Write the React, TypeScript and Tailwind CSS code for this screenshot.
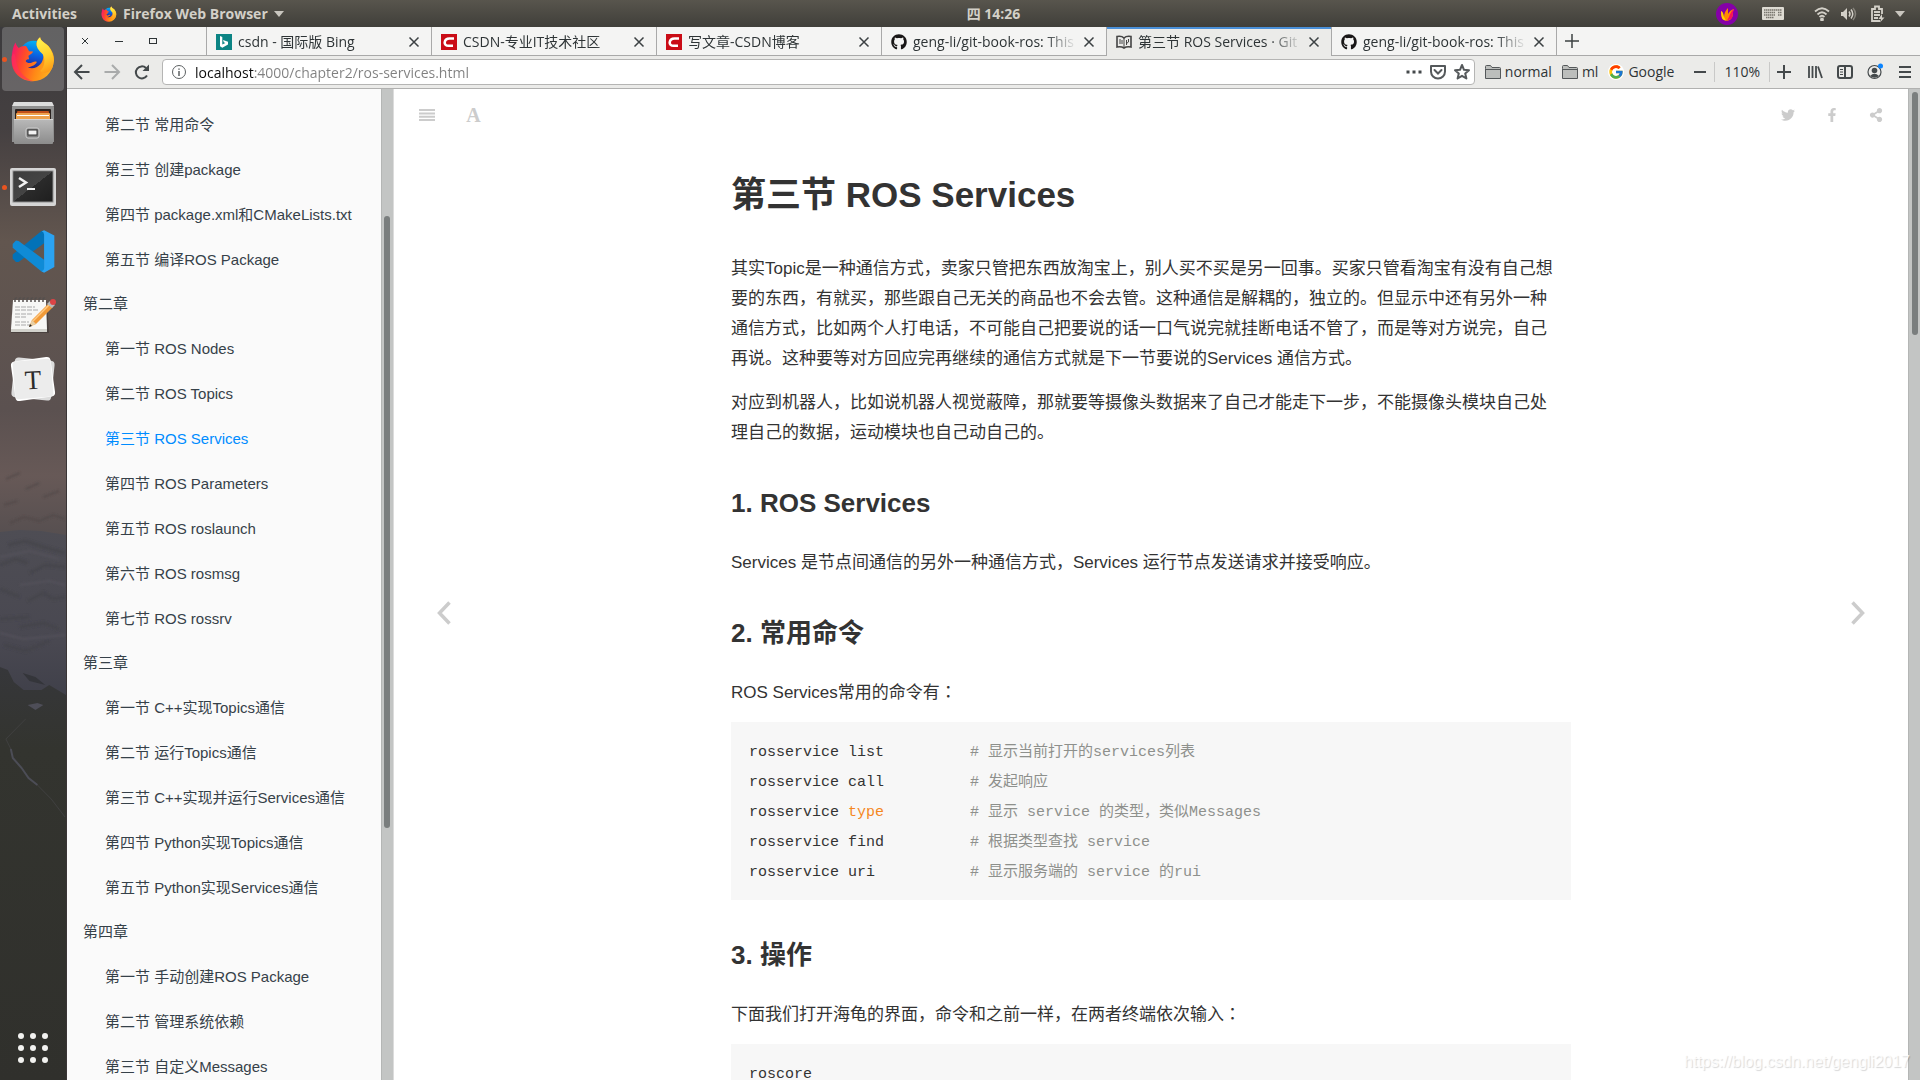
import type { ReactNode } from "react";
import { FaFacebookF, FaGithub, FaShareAlt, FaTwitter } from "react-icons/fa";
import { FcGoogle } from "react-icons/fc";

interface TabInfo {
  title: string;
  icon: ReactNode;
  active?: boolean;
}

interface Chapter {
  title?: string;
  articles: string[];
}

const UI_FONT = "font-['Open_Sans','Noto_Sans_CJK_SC',sans-serif]";
const DOC_FONT = "font-['Liberation_Sans','Noto_Sans_CJK_SC',sans-serif]";
const CODE_FONT = "font-['Liberation_Mono','Noto_Sans_CJK_SC',monospace]";

const CURRENT_ARTICLE = "第三节 ROS Services";

const chapters: Chapter[] = [
  {
    articles: [
      "第二节 常用命令",
      "第三节 创建package",
      "第四节 package.xml和CMakeLists.txt",
      "第五节 编译ROS Package",
    ],
  },
  {
    title: "第二章",
    articles: [
      "第一节 ROS Nodes",
      "第二节 ROS Topics",
      "第三节 ROS Services",
      "第四节 ROS Parameters",
      "第五节 ROS roslaunch",
      "第六节 ROS rosmsg",
      "第七节 ROS rossrv",
    ],
  },
  {
    title: "第三章",
    articles: [
      "第一节 C++实现Topics通信",
      "第二节 运行Topics通信",
      "第三节 C++实现并运行Services通信",
      "第四节 Python实现Topics通信",
      "第五节 Python实现Services通信",
    ],
  },
  {
    title: "第四章",
    articles: ["第一节 手动创建ROS Package", "第二节 管理系统依赖", "第三节 自定义Messages"],
  },
];

const commands = [
  { name: "list", comment: "# 显示当前打开的services列表" },
  { name: "call", comment: "# 发起响应" },
  { name: "type", comment: "# 显示 service 的类型，类似Messages", keyword: true },
  { name: "find", comment: "# 根据类型查找 service" },
  { name: "uri", comment: "# 显示服务端的 service 的rui" },
];

/* ---------- App icons ---------- */

function FirefoxIcon({ className, id }: { className: string; id: string }) {
  return (
    <svg viewBox="30 44 140 142" className={className} aria-hidden="true">
      <defs>
        <linearGradient id={`${id}-globe`} x1="0.6" y1="0" x2="0.4" y2="1">
          <stop offset="0" stopColor="#00b4f5" />
          <stop offset="0.5" stopColor="#0a5fe0" />
          <stop offset="1" stopColor="#2b1a86" />
        </linearGradient>
        <linearGradient id={`${id}-body`} x1="0" y1="0.3" x2="1" y2="0.6">
          <stop offset="0" stopColor="#f5156c" />
          <stop offset="0.3" stopColor="#ff4a2a" />
          <stop offset="0.65" stopColor="#ff8a16" />
          <stop offset="1" stopColor="#ffb320" />
        </linearGradient>
        <linearGradient id={`${id}-flame`} x1="0.3" y1="0" x2="0.5" y2="1">
          <stop offset="0" stopColor="#fff44f" />
          <stop offset="0.55" stopColor="#ffd02e" />
          <stop offset="1" stopColor="#ff9a17" />
        </linearGradient>
      </defs>
      <circle cx="102" cy="104" r="45" fill={`url(#${id}-globe)`} />
      <path
        fill={`url(#${id}-body)`}
        d="M46 64C48 72 52 77 56 81C62 76 70 74 78 75C82 79 84 85 88 91L100 92C98 100 88 102 86 106L88 116C78 116 74 122 82 126C94 132 104 118 112 124C106 136 94 138 84 141C108 151 133 130 132 106C131 92 120 86 112 76C108 64 114 54 122 48C124 62 138 64 148 76C160 90 166 104 165 120C160 160 134 184 100 184C62 184 34 156 34 120C34 100 38 76 46 64Z"
      />
      <path
        fill={`url(#${id}-flame)`}
        d="M122 48C124 62 138 64 148 76C162 94 168 120 160 142C150 160 132 162 122 152C138 138 138 114 130 100C118 90 108 78 112 62C114 56 118 50 122 48Z"
      />
      <path fill="#ff2f5e" opacity="0.55" d="M34 108C32 148 62 184 102 184C72 174 50 150 46 112C44 96 40 92 34 108Z" />
    </svg>
  );
}

function FilesIcon() {
  return (
    <svg viewBox="0 0 44 44" className="size-11" aria-hidden="true">
      <defs>
        <linearGradient id="files-front" x1="0" y1="0" x2="0" y2="1">
          <stop offset="0" stopColor="#b9b9b9" />
          <stop offset="1" stopColor="#8c8c8c" />
        </linearGradient>
      </defs>
      <path d="M3 1H41L43 6V41H1V6Z" fill="#8f8f8f" />
      <path d="M3 1H41L43 5H1Z" fill="#dcdcdc" />
      <rect x="4" y="8" width="36" height="11" rx="1" fill="#2a2220" />
      <rect x="6" y="10" width="32" height="3" rx="1" fill="#c2501a" />
      <rect x="5" y="12" width="34" height="7" rx="1" fill="#eda24e" />
      <rect x="6" y="14" width="32" height="1" fill="#fff" />
      <rect x="3" y="18" width="39" height="25" rx="1" fill="url(#files-front)" />
      <rect x="3" y="18" width="39" height="1" fill="#d6d6d6" />
      <rect x="15" y="27" width="13" height="10" rx="2" fill="#7c7c7c" stroke="#cfcfcf" />
      <rect x="17" y="29" width="9" height="5" fill="#f2f2f2" stroke="#333" />
    </svg>
  );
}

function TerminalIcon() {
  return (
    <svg viewBox="0 0 46 38" className="w-[46px] h-[38px]" aria-hidden="true">
      <defs>
        <linearGradient id="term-screen" x1="0" y1="0" x2="1" y2="1">
          <stop offset="0" stopColor="#3d3d3d" />
          <stop offset="0.5" stopColor="#444" />
          <stop offset="0.5" stopColor="#2b2b2b" />
          <stop offset="1" stopColor="#1f1f1f" />
        </linearGradient>
      </defs>
      <rect width="46" height="38" rx="2" fill="#d5d5d5" />
      <rect x="3" y="3" width="40" height="31" fill="#222" stroke="#8f8f8f" />
      <rect x="4" y="4" width="38" height="29" fill="url(#term-screen)" />
      <path d="M9 10l7 4.500l-7 4.500" fill="none" stroke="#f2f2f2" strokeWidth="2.500" />
      <path d="M17 21h8" stroke="#f2f2f2" strokeWidth="2" />
    </svg>
  );
}

function CodeIcon() {
  return (
    <svg viewBox="34 628 130 130" className="size-[43px]" aria-hidden="true">
      <path d="M36 702L124 630L131 632V668L54 725L46 725L36 714Z" fill="#0272b8" />
      <path d="M36 670L46 660L54 661L131 718V756L124 754L36 682Z" fill="#0f8bd6" />
      <path d="M131 629L162 645V740L131 757L124 753Q131 752 131 744V642Q131 634 124 632Z" fill="#2aa3f2" />
    </svg>
  );
}

function NotesIcon() {
  return (
    <svg viewBox="0 0 48 40" className="w-12 h-10" aria-hidden="true">
      <path d="M4 6H38L40 38H2Z" fill="#3c3634" opacity="0.6" />
      <path d="M4 5H37L38 34H2Z" fill="#f7f7f5" />
      <path d="M2 34H38V37H2Z" fill="#d2d2cc" />
      {[6, 10, 14, 18, 22, 26, 30, 34].map((x) => (
        <path key={x} d={`M${x} 7V4a1.500 1.500 0 0 1 2 -1`} fill="none" stroke="#55504e" strokeWidth="1.500" />
      ))}
      <path d="M6 12H26M6 15H30M6 19H24M6 22H18M6 27H20M6 30H22" stroke="#a9a9a9" strokeDasharray="5 1" />
      <path d="M20 32L23 25L40 8L44 12L27 29Z" fill="#f19a38" />
      <path d="M24 26L41 9" stroke="#ffc981" strokeWidth="1.500" />
      <path d="M20 32L23 25L27 29Z" fill="#e8cfa4" />
      <path d="M20 32L21 29L23 31Z" fill="#222" />
      <path d="M38 9L41 6L46 10L43 13Z" fill="#b9b9b9" />
      <circle cx="44" cy="7" r="3" fill="#dc4446" />
    </svg>
  );
}

function TyporaIcon() {
  return (
    <svg viewBox="0 0 46 46" className="size-[46px]" aria-hidden="true">
      <rect x="3" y="3" width="40" height="40" rx="4" fill="#dcdcdc" transform="rotate(6 23 23)" />
      <rect x="3" y="3" width="40" height="40" rx="4" fill="#fff" transform="rotate(-8 23 23)" />
      <rect x="4" y="4" width="38" height="38" rx="3" fill="#ececec" transform="rotate(-5 23 23)" />
      <text x="23" y="33" textAnchor="middle" fontSize="27" fill="#2c2c2c" fontFamily="Liberation Serif, serif" transform="rotate(-3 23 23)">
        T
      </text>
    </svg>
  );
}

/* ---------- Favicons ---------- */

function BingIcon() {
  return (
    <svg viewBox="0 0 16 16" className="size-4 shrink-0" aria-hidden="true">
      <rect width="16" height="16" fill="#0c8484" />
      <path d="M4 2L6.300 3V10.500L9.300 9L7.800 8.300L7 6L12 7.800V10.400L6.300 13.700L4 12.300Z" fill="#fff" />
    </svg>
  );
}

function CsdnIcon() {
  return (
    <svg viewBox="0 0 16 16" className="size-4 shrink-0" aria-hidden="true">
      <rect width="16" height="16" fill="#ca0c16" />
      <path d="M13 4.500H8.500C5.500 4.500 4 6 3.700 8.300C3.500 10.500 5 11.800 7.500 11.800H12" fill="none" stroke="#fff" strokeWidth="2.600" />
    </svg>
  );
}

function GitBookIcon() {
  return (
    <svg viewBox="0 0 16 16" className="size-4 shrink-0" fill="none" stroke="#444" aria-hidden="true">
      <path d="M1 2.500C4 2 6.500 2.500 8 4C9.500 2.500 12 2 15 2.500V13C12 12.500 9.500 13 8 14C6.500 13 4 12.500 1 13Z" strokeWidth="1.600" />
      <path d="M8 4V14M4 5V10M6 6V10M10.500 11V6M12.500 5V8L10.500 9.500" />
    </svg>
  );
}

const tabs: TabInfo[] = [
  { title: "csdn - 国际版 Bing", icon: <BingIcon /> },
  { title: "CSDN-专业IT技术社区", icon: <CsdnIcon /> },
  { title: "写文章-CSDN博客", icon: <CsdnIcon /> },
  { title: "geng-li/git-book-ros: This", icon: <FaGithub className="size-4 shrink-0 text-[#191717]" /> },
  { title: "第三节 ROS Services · Git", icon: <GitBookIcon />, active: true },
  { title: "geng-li/git-book-ros: This", icon: <FaGithub className="size-4 shrink-0 text-[#191717]" /> },
];

/* ---------- Desktop shell ---------- */

function Caret() {
  return (
    <svg viewBox="0 0 10 6" className="w-2.5 h-1.5" aria-hidden="true">
      <path d="M0 0H10L5 6Z" fill="#c9c6bf" />
    </svg>
  );
}

function TopBar() {
  return (
    <header
      className={`grid h-[27px] shrink-0 grid-cols-[67px_1fr_auto_1fr] items-center bg-linear-to-b from-[#58554d] to-[#403f3a] text-sm font-bold text-[#d3d0c8] ${UI_FONT}`}>
      <div className="col-span-2 flex items-center pl-3">
        <button className="mr-6">Activities</button>
        <button className="flex items-center gap-1.5">
          <FirefoxIcon id="bar" className="size-4" />
          Firefox Web Browser
          <Caret />
        </button>
      </div>
      <button>四 14:26</button>
      <div className="flex items-center justify-end pr-[15px]">
        <svg viewBox="0 0 22 22" className="mr-6 size-[22px]" aria-hidden="true">
          <circle cx="11" cy="11" r="11" fill="#8500a8" />
          <path d="M5 8C8 10 7 12 8 14C8 10 10 7 12 5C12 8 12 9 12 11C14 8 15 7 18 6C16 9 18 13 15 16C12 19 7 18 6 15C5 12 5 10 5 8Z" fill="#ff8a00" />
          <path d="M13 14C14 11 15 8 18 6C16 10 18 13 15 16L11 17.500Z" fill="#f9125c" />
          <path d="M5 8C8 10 7 12 8 14L10 17.500C7 17 6 16 5.500 13Z" fill="#ffd400" />
        </svg>
        <svg viewBox="0 0 22 13" className="mr-[30px] w-[22px] h-[13px]" aria-hidden="true">
          <rect width="22" height="13" rx="1" fill="#dedbd3" />
          <path d="M2 3H20M2 5.500H13M2 8H13M16 5.500H20M16 8H20M4 10.500H12" stroke="#77746c" strokeWidth="1.500" strokeDasharray="1.500 0.500" />
        </svg>
        <svg viewBox="0 0 16 14" className="mr-[11px] w-4 h-3.5" fill="none" stroke="#d3d0c8" strokeWidth="1.800" aria-hidden="true">
          <path d="M1 4.500Q8 -2 15 4.500M3.500 7.500Q8 3 12.500 7.500M5.500 10Q8 7.500 10.500 10" />
          <circle cx="8" cy="12.500" r="1" fill="#d3d0c8" />
        </svg>
        <svg viewBox="0 0 16 14" className="mr-3.5 w-4 h-3.5" fill="none" stroke="#d3d0c8" strokeWidth="1.500" aria-hidden="true">
          <path d="M0 5H2L6 1V13L2 9H0Z" fill="#d3d0c8" stroke="none" />
          <path d="M8 4.500Q10 7 8 9.500M10 2.500Q13.500 7 10 11.500" />
          <path d="M12 1Q17 7 12 13" stroke="#85827a" />
        </svg>
        <svg viewBox="0 0 14 18" className="mr-[10px] w-3.5 h-[18px]" fill="none" stroke="#d3d0c8" strokeWidth="1.800" aria-hidden="true">
          <path d="M9 16H1V4H4V1.500H8V4H11V9M3 7H9M3 10H9M3 13H7" />
          <path d="M11 9L7.500 14H10L9 17.500L13.500 12.500H11Z" fill="#d3d0c8" stroke="none" />
        </svg>
        <Caret />
      </div>
    </header>
  );
}

function DockItem({ label, running, active, children }: { label: string; running?: boolean; active?: boolean; children: ReactNode }) {
  return (
    <button
      aria-label={label}
      className={`relative mx-0.5 flex h-16 items-center justify-center rounded ${active ? "bg-white/20" : ""}`}>
      {running && <span className="absolute left-0 size-[5px] rounded-full bg-[#e95420]" />}
      {children}
    </button>
  );
}

function Dock() {
  return (
    <nav
      aria-label="Dock"
      className="relative flex w-[67px] shrink-0 flex-col justify-between overflow-hidden border-r border-[#3a3536] bg-[#30302c]">
      {/* Wallpaper showing through the dock */}
      <svg viewBox="0 0 67 1053" preserveAspectRatio="none" className="absolute inset-0 size-full" aria-hidden="true">
        <defs>
          <linearGradient id="dock-sky" x1="0" y1="0" x2="0" y2="1">
            <stop offset="0" stopColor="#3c3b3d" />
            <stop offset="0.2" stopColor="#454041" />
            <stop offset="0.42" stopColor="#62564f" />
            <stop offset="0.75" stopColor="#5b5150" />
            <stop offset="0.88" stopColor="#675957" />
            <stop offset="1" stopColor="#564f50" />
          </linearGradient>
          <linearGradient id="dock-snow" x1="0" y1="0" x2="0" y2="1">
            <stop offset="0" stopColor="#4e4d54" />
            <stop offset="0.6" stopColor="#494851" />
            <stop offset="1" stopColor="#3c3d47" />
          </linearGradient>
          <linearGradient id="dock-ground" x1="0" y1="0" x2="0" y2="1">
            <stop offset="0" stopColor="#36373a" />
            <stop offset="0.2" stopColor="#33342f" />
            <stop offset="1" stopColor="#30302c" />
          </linearGradient>
          <filter id="dock-soft">
            <feGaussianBlur stdDeviation="1" />
          </filter>
        </defs>
        <rect width="67" height="510" fill="url(#dock-sky)" />
        <path d="M0 505L20 503L42 504L67 508V690H0Z" fill="url(#dock-snow)" />
        <g filter="url(#dock-soft)">
          <path
            d="M10 496L24 490L40 494L54 488L66 492M4 478L18 474M26 462L40 456M44 470L60 464M6 452L20 446"
            stroke="#4c4444"
            strokeWidth="2"
            fill="none"
            opacity="0.6"
          />
          <path
            d="M8 518L26 514L44 520L66 526M0 538L16 532L28 536M30 546L46 538L66 540M0 562L20 570M28 574L44 566L54 572L66 570M0 592L30 590M20 600L44 596L60 602M4 618L26 624L50 614"
            stroke="#3f3f48"
            strokeWidth="4"
            fill="none"
            opacity="0.5"
          />
          <path d="M0 530L30 524L60 532M20 558L50 554L66 558M0 606L24 612L66 608" stroke="#58575f" strokeWidth="2" fill="none" opacity="0.6" />
        </g>
        <path d="M0 640L8 643L14 655L24 663H42L50 658L67 668V1053H0Z" fill="url(#dock-ground)" />
        <path d="M23 646L36 650L46 658L30 654Z" fill="#34353a" />
        <path d="M28 678L38 676L44 678L36 683Z" fill="#4e4e58" />
        <path d="M11 722L13 731L22 741L29 751L38 758" stroke="#4c4d56" strokeWidth="2" fill="none" />
        <path d="M38 758L52 772L66 790M11 722L6 712L26 692" stroke="#3f403f" fill="none" />
      </svg>
      <div className="relative flex flex-col">
        <DockItem label="Firefox" running active>
          <FirefoxIcon id="dock" className="size-[46px]" />
        </DockItem>
        <DockItem label="Files">
          <FilesIcon />
        </DockItem>
        <DockItem label="Terminal" running>
          <TerminalIcon />
        </DockItem>
        <DockItem label="Visual Studio Code">
          <CodeIcon />
        </DockItem>
        <DockItem label="Text Editor">
          <NotesIcon />
        </DockItem>
        <DockItem label="Typora">
          <TyporaIcon />
        </DockItem>
      </div>
      <button aria-label="Show Applications" className="relative flex h-16 items-center justify-center">
        <span className="grid grid-cols-3 gap-1.5">
          {Array.from({ length: 9 }, (_, i) => (
            <span key={i} className="size-1.5 rounded-full bg-[#f2f2f0]" />
          ))}
        </span>
      </button>
    </nav>
  );
}

/* ---------- Browser chrome ---------- */

function TabStrip() {
  return (
    <div className="flex h-[29px] shrink-0 bg-[#f4f4f3] text-sm text-[#2e3436]">
      <div className="flex w-[139px] shrink-0 items-center border-b border-[#a9a9a9] pl-px text-[#2e3436]">
        <button aria-label="Close window" className="flex w-[34px] justify-center">
          <svg viewBox="0 0 6 6" className="size-1.5" stroke="currentColor" aria-hidden="true">
            <path d="M0 0L6 6M6 0L0 6" />
          </svg>
        </button>
        <button aria-label="Minimize window" className="flex w-[34px] justify-center">
          <span className="h-px w-2 bg-[#2e3436]" />
        </button>
        <button aria-label="Maximize window" className="flex w-[34px] justify-center">
          <span className="h-1.5 w-2 border border-[#2e3436]" />
        </button>
      </div>
      {tabs.map((tab, index) => (
        <div
          key={index}
          className={`flex w-[225px] min-w-0 items-center border-l border-[#a9a9a9] pt-px pr-[11px] pl-[9px] ${
            tab.active ? "bg-[#ebebe9] shadow-[inset_0_2px_0_#4a90d9]" : "border-b"
          }`}>
          {tab.icon}
          <a
            href="#"
            className="ml-1.5 flex-1 overflow-hidden whitespace-nowrap [mask-image:linear-gradient(to_left,transparent,black_32px)]">
            {tab.title}
          </a>
          <button aria-label="Close tab" className="ml-1.5">
            <svg viewBox="0 0 12 12" className="size-3" fill="none" stroke="#3c4143" strokeWidth="1.500" aria-hidden="true">
              <path d="M1.500 1.500L10.500 10.500M10.500 1.500L1.500 10.500" />
            </svg>
          </button>
        </div>
      ))}
      <div className="flex flex-1 items-center border-b border-l border-[#a9a9a9] pl-2">
        <button aria-label="New tab">
          <svg viewBox="0 0 14 14" className="size-3.5" stroke="#3c4143" strokeWidth="1.500" aria-hidden="true">
            <path d="M7 0V14M0 7H14" />
          </svg>
        </button>
      </div>
    </div>
  );
}

function FolderIcon() {
  return (
    <svg viewBox="0 0 16 14" className="w-4 h-3.5" fill="#bcbebc" stroke="#54585a" aria-hidden="true">
      <path d="M0.500 3.500V1.500Q0.500 0.500 1.500 0.500H5.500L7 2.500H14.500Q15.500 2.500 15.500 3.500V13.500H0.500Z" />
      <path d="M0.500 4.500H15.500" />
    </svg>
  );
}

function ToolButton({ label, children }: { label: string; children: ReactNode }) {
  return (
    <button aria-label={label} className="flex size-4 items-center justify-center">
      <svg viewBox="0 0 16 16" className="size-4 overflow-visible" fill="none" stroke="#44494b" strokeWidth="2" aria-hidden="true">
        {children}
      </svg>
    </button>
  );
}

function NavBar() {
  return (
    <div className="flex h-[33px] shrink-0 items-center border-b border-[#b1b1b0] bg-[#ebebe9] pr-[7px] pl-[7px] text-sm text-[#2e3436]">
      <div className="flex gap-3.5">
        <ToolButton label="Back">
          <path d="M15.500 8H1.500M8 1L1 8L8 15" />
        </ToolButton>
        <ToolButton label="Forward">
          <path d="M0.500 8H14.500M8 1L15 8L8 15" stroke="#a9abab" />
        </ToolButton>
        <ToolButton label="Reload">
          <path d="M13 11.500A6 6 0 1 1 12 4" />
          <path d="M15 0.500V7H8.500Z" fill="#44494b" stroke="none" />
        </ToolButton>
      </div>
      <div className="ml-3 flex h-[26px] flex-1 items-center rounded border border-[#b5b5b4] bg-white pr-1 pl-[9px]">
        <svg viewBox="0 0 14 14" className="size-3.5 shrink-0" fill="none" stroke="#5c6062" aria-hidden="true">
          <circle cx="7" cy="7" r="6.500" />
          <path d="M7 6V11M7 3.500V4.800" strokeWidth="1.500" />
        </svg>
        <input
          aria-label="Address"
          defaultValue="localhost:4000/chapter2/ros-services.html"
          className="ml-[9px] h-6 min-w-0 flex-1 bg-linear-to-r from-[#0c0c0c] from-[59px] to-[#808080] to-[59px] bg-clip-text text-transparent outline-none"
        />
        <div className="flex gap-2">
          <ToolButton label="Page actions">
            <path d="M0.500 8h3M6.500 8h3M12.500 8h3" strokeWidth="3" />
          </ToolButton>
          <ToolButton label="Save to Pocket">
            <path d="M1 2H15V7.500A7 7 0 0 1 1 7.500Z" stroke="#55595b" strokeLinejoin="round" />
            <path d="M4.500 6L8 9.500L11.500 6" stroke="#55595b" strokeLinecap="round" />
          </ToolButton>
          <ToolButton label="Bookmark this page">
            <path d="M8 1L10 5.800L15 6.200L11.200 9.500L12.400 14.500L8 11.800L3.600 14.500L4.800 9.500L1 6.200L6 5.800Z" stroke="#55595b" strokeLinejoin="round" />
          </ToolButton>
        </div>
      </div>
      <a href="#" className="ml-[10px] flex items-center gap-1">
        <FolderIcon />
        normal
      </a>
      <a href="#" className="ml-[10px] flex items-center gap-1">
        <FolderIcon />
        ml
      </a>
      <a href="#" className="ml-[10px] flex items-center gap-1">
        <span className="rounded-full bg-white">
          <FcGoogle className="size-4" />
        </span>
        Google
      </a>
      <div className="ml-[18px] flex items-center gap-1.5">
        <ToolButton label="Zoom out">
          <path d="M2 8H14" />
        </ToolButton>
        <span className="h-5 w-px bg-[#c9c9c8]" />
        <button className="px-[3px]">110%</button>
        <span className="h-5 w-px bg-[#c9c9c8]" />
        <ToolButton label="Zoom in">
          <path d="M1 8H15M8 1V15" />
        </ToolButton>
      </div>
      <div className="ml-[15px] flex items-center gap-3.5">
        <ToolButton label="Library">
          <path d="M2 2V14M5.500 2V14M9 2V14M11 2.500L15 14" strokeWidth="1.800" />
        </ToolButton>
        <ToolButton label="Sidebars">
          <rect x="1" y="2" width="14" height="12" rx="2" />
          <path d="M8 2V14" />
          <path d="M3 5.500H6M3 8H6M3 10.500H6" strokeWidth="1" />
        </ToolButton>
        <ToolButton label="Account">
          <circle cx="7.500" cy="8" r="6.500" strokeWidth="1.200" />
          <circle cx="7.500" cy="6.500" r="2.800" fill="#44494b" stroke="none" />
          <path d="M3 12Q7.500 7.500 12 12Q7.500 15.500 3 12Z" fill="#44494b" stroke="none" />
          <circle cx="13.500" cy="2" r="2.500" fill="#0a84ff" stroke="none" />
        </ToolButton>
        <ToolButton label="Open menu">
          <path d="M2 3H14M2 8H14M2 13H14" />
        </ToolButton>
      </div>
    </div>
  );
}

/* ---------- Book page ---------- */

function Summary() {
  return (
    <aside className="flex w-[327px] shrink-0 overflow-hidden bg-[#fafafa]">
      <ul className="flex-1 overflow-hidden pt-[13px] text-[15px] text-[#364149]">
        {chapters.map((chapter, index) => (
          <li key={index}>
            {chapter.title && <span className="block pl-4 leading-[44px]">{chapter.title}</span>}
            <ul>
              {chapter.articles.map((article) => (
                <li key={article}>
                  <a
                    href="#"
                    className={`block pl-[38px] leading-[45px] whitespace-nowrap ${
                      article === CURRENT_ARTICLE ? "text-[#008cff]" : ""
                    }`}>
                    {article}
                  </a>
                </li>
              ))}
            </ul>
          </li>
        ))}
      </ul>
      <div className="w-[13px] border-x border-l-[#b4b6b5] border-r-[#dcdcdc] bg-[#c3c5c4] pt-[127px] pr-px">
        <div className="mx-auto h-[612px] w-1.5 rounded-full bg-[#7a7e7e]" />
      </div>
    </aside>
  );
}

function SectionTitle({ children }: { children: ReactNode }) {
  return <h2 className="mt-[39px] mb-[29px] text-[26px] leading-[32px] font-bold">{children}</h2>;
}

/* Full-width colon centred in its cell */
function Colon() {
  return <span className="leading-none font-['Noto_Sans_CJK_TC',sans-serif]">：</span>;
}

function CodeBlock({ children }: { children: ReactNode }) {
  return (
    <pre className={`bg-[#f7f7f7] px-[18px] pt-4 pb-3 text-[15px] leading-[30px] ${CODE_FONT}`}>
      <code className={CODE_FONT}>{children}</code>
    </pre>
  );
}

function Article() {
  return (
    <article className="mx-auto w-full max-w-[840px] pt-[33px] text-[17px] leading-[30px] text-[#333]">
      <h1 className="mb-[38px] text-[35px] leading-[42px] font-bold">第三节 ROS Services</h1>
      <p className="mb-[14px] pr-2.5">
        其实Topic是一种通信方式，卖家只管把东西放淘宝上，别人买不买是另一回事。买家只管看淘宝有没有自己想要的东西，有就买，那些跟自己无关的商品也不会去管。这种通信是解耦的，独立的。但显示中还有另外一种通信方式，比如两个人打电话，不可能自己把要说的话一口气说完就挂断电话不管了，而是等对方说完，自己再说。这种要等对方回应完再继续的通信方式就是下一节要说的Services 通信方式。
      </p>
      <p className="pr-2.5">
        对应到机器人，比如说机器人视觉蔽障，那就要等摄像头数据来了自己才能走下一步，不能摄像头模块自己处理自己的数据，运动模块也自己动自己的。
      </p>

      <SectionTitle>1. ROS Services</SectionTitle>
      <p>Services 是节点间通信的另外一种通信方式，Services 运行节点发送请求并接受响应。</p>

      <SectionTitle>2. 常用命令</SectionTitle>
      <p className="mb-[14px]">
        ROS Services常用的命令有
        <Colon />
      </p>
      <CodeBlock>
        {commands.map((command) => (
          <span key={command.name} className="grid grid-cols-[221px_1fr]">
            <span>
              rosservice <span className={command.keyword ? "text-[#f5871f]" : ""}>{command.name}</span>
            </span>
            <span className="text-[#8e908c]">{command.comment}</span>
          </span>
        ))}
      </CodeBlock>

      <SectionTitle>3. 操作</SectionTitle>
      <p className="mb-[14px]">
        下面我们打开海龟的界面，命令和之前一样，在两者终端依次输入
        <Colon />
      </p>
      <CodeBlock>roscore</CodeBlock>
    </article>
  );
}

function BookHeader() {
  return (
    <div className="flex h-[52px] shrink-0 items-center justify-between pr-[10px] pl-[9px] text-[#ccc]">
      <div className="flex items-center">
        <button aria-label="Toggle summary" className="flex w-[47px] justify-center">
          <svg viewBox="0 0 16 12" className="w-4 h-3" fill="currentColor" aria-hidden="true">
            <path d="M0 0H16V2H0ZM0 3.400H16V5.400H0ZM0 6.700H16V8.700H0ZM0 10H16V12H0Z" />
          </svg>
        </button>
        <button
          aria-label="Font settings"
          className="w-[47px] text-center font-['Liberation_Serif',serif] text-[20px] font-bold">
          A
        </button>
      </div>
      <div className="flex items-center">
        <a href="#" aria-label="Twitter" className="flex w-11 justify-center">
          <FaTwitter className="size-3.5" />
        </a>
        <a href="#" aria-label="Facebook" className="flex w-11 justify-center">
          <FaFacebookF className="size-3.5" />
        </a>
        <a href="#" aria-label="Share" className="flex w-11 justify-center">
          <FaShareAlt className="size-3.5" />
        </a>
      </div>
    </div>
  );
}

function PageArrow({ label, path }: { label: string; path: string }) {
  return (
    <a href="#" aria-label={label} className="flex w-[100px] shrink-0 items-center justify-center pt-1">
      <svg viewBox="0 0 14 24" className="h-6 w-3.5" fill="none" stroke="#ccc" strokeWidth="3.500" aria-hidden="true">
        <path d={path} />
      </svg>
    </a>
  );
}

export default function App() {
  return (
    <div className="flex h-screen flex-col overflow-hidden bg-white">
      <TopBar />
      <div className="flex min-h-0 flex-1">
        <Dock />
        <div className={`flex min-w-0 flex-1 flex-col ${UI_FONT}`}>
          <TabStrip />
          <NavBar />
          <div className={`relative flex min-h-0 flex-1 ${DOC_FONT}`}>
            <Summary />
            <main className="flex min-w-0 flex-1 flex-col">
              <BookHeader />
              <div className="flex min-h-0 flex-1 overflow-hidden">
                <PageArrow label="Previous page" path="M12.500 1.500L2.500 12L12.500 22.500" />
                <div className="min-w-0 flex-1">
                  <Article />
                </div>
                <PageArrow label="Next page" path="M1.500 1.500L11.500 12L1.500 22.500" />
              </div>
            </main>
            <div className="w-3 shrink-0 border-l border-[#b4b6b5] bg-[#c3c5c4] pt-[3px]">
              <div className="mx-auto h-[243px] w-1.5 rounded-full bg-[#7a7e7e]" />
            </div>
            <span className="absolute right-[10px] bottom-1.5 text-base text-white/80 [text-shadow:1px_1px_1px_rgba(0,0,0,0.16)]">
              https://blog.csdn.net/gengli2017
            </span>
          </div>
        </div>
      </div>
    </div>
  );
}
